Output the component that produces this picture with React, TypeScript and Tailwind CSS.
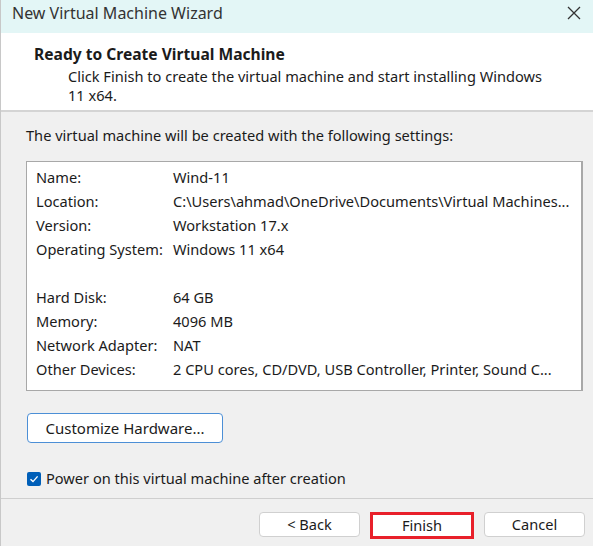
import React from 'react';

const rows: [string, string][] = [
  ['Name:', 'Wind-11'],
  ['Location:', 'C:\\Users\\ahmad\\OneDrive\\Documents\\Virtual Machines...'],
  ['Version:', 'Workstation 17.x'],
  ['Operating System:', 'Windows 11 x64'],
  ['', ''],
  ['Hard Disk:', '64 GB'],
  ['Memory:', '4096 MB'],
  ['Network Adapter:', 'NAT'],
  ['Other Devices:', '2 CPU cores, CD/DVD, USB Controller, Printer, Sound C...'],
];

function App() {
  return (
    <div className="w-[593px] h-[546px] bg-[#f0f0f0] flex flex-col overflow-hidden border-l border-[#c8c8c8] text-[#1b1b1b] font-['Noto_Sans',sans-serif]">
      {/* Title bar */}
      <div className="h-[33px] shrink-0 bg-[#e3f6f6] flex items-center justify-between pl-[11px] pr-[12px]">
        <span className="text-[16px] text-[#333] -mt-[7px]">New Virtual Machine Wizard</span>
        <svg width="14" height="14" viewBox="0 0 14 14" className="-mt-[7px]">
          <path d="M1 1 L13 13 M13 1 L1 13" stroke="#333" strokeWidth="1.3" />
        </svg>
      </div>

      {/* Header */}
      <div className="h-[79px] shrink-0 bg-white border-b-2 border-[#d4d4d4] pt-[11px]">
        <div className="pl-[33px] text-[15.6px] font-bold leading-[20px]">Ready to Create Virtual Machine</div>
        <div className="pl-[67px] pr-[38px] text-[14.6px] leading-[19px] mt-[3px]">
          Click Finish to create the virtual machine and start installing Windows 11 x64.
        </div>
      </div>

      {/* Body */}
      <div className="flex-1 flex flex-col pl-[25px] pr-[10px] text-[14.6px]">
        <div className="mt-[14px] leading-[19px]">The virtual machine will be created with the following settings:</div>
        <div className="mt-[16px] w-[557px] h-[230px] bg-white border border-[#a8a8a8] border-r-2 pt-[4px] pl-[9px]">
          {rows.map(([k, v], i) => (
            <div key={i} className="h-[24px] flex items-center whitespace-nowrap">
              <span className="w-[137px] shrink-0">{k}</span>
              <span>{v}</span>
            </div>
          ))}
        </div>
        <button className="mt-[22px] ml-[1px] w-[196px] h-[30px] bg-white border border-[#4c8fd6] rounded-[4px] text-[15px] text-[#1b1b1b]">
          Customize Hardware...
        </button>
        <label className="mt-[26px] flex items-center gap-[5px]">
          <span className="w-[14px] h-[14px] rounded-[2px] bg-[#005fb8] flex items-center justify-center ml-[1px]">
            <svg width="10" height="10" viewBox="0 0 10 10">
              <path d="M1.5 5.2 L4 7.6 L8.6 2.4" stroke="white" strokeWidth="1.4" fill="none" />
            </svg>
          </span>
          <span className="leading-[19px]">Power on this virtual machine after creation</span>
        </label>
      </div>

      {/* Footer */}
      <div className="h-[48px] shrink-0 border-t border-[#cfcfcf] flex items-start justify-end gap-[10px] pr-[8px] pt-[13px] text-[14.6px]">
        <button className="w-[101px] h-[25px] bg-white border border-[#d0d0d0] rounded-[4px]">&lt; Back</button>
        <button className="w-[104px] h-[27px] bg-white border-[3px] border-[#e8202a]">Finish</button>
        <button className="w-[101px] h-[25px] bg-white border border-[#d0d0d0] rounded-[4px]">Cancel</button>
      </div>
    </div>
  );
}

export default App;
